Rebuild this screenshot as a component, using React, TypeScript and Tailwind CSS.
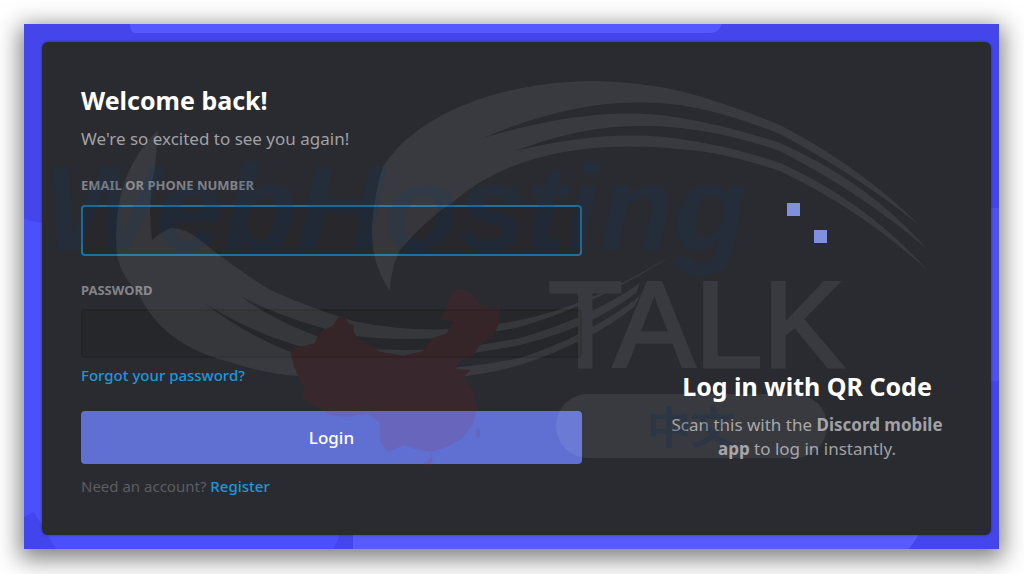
const CHINA =
  'M30 240l30-10 45-10 8-26 17-14 30-13 12-22 18-7 16 22 14 5 2 22 10 16 38 22 30 20 70 12 60-14 28-38 42-15 20-35-40-8 18-26 17-55 30-10 35 18 20 32 40 15 20-15-3 55-17 38-40 27-25 35-38 10-7 25 42 5-22 20 32 45 10 45-13 50-32 45-45 25-50 15-50-10-30-10-50 20-20-30-5-60-35-25-60 10-50-5-40-25-45-25 8-25-13-30-20-40z';

function Backdrop() {
  return (
    <svg
      className="pointer-events-none absolute inset-0 h-full w-full"
      viewBox="0 0 975 525"
      preserveAspectRatio="none"
      aria-hidden="true"
    >
      <path d="M106 0h592q-3 9-12 9H112q-6 0-6-9z" fill="#5558ff" />
      <path d="M0 195q12 4 24 5v325H0z" fill="#4c50fb" />
      <path d="M24 500h291v13l-6 12H24z" fill="#4c50fb" />
      <path d="M0 210l0 0v283l10-5 8 13 14 24H0z" fill="#4245ec" />
      <path d="M0 195q12 4 24 5v288H0z" fill="#4c50fb" />
      <path d="M329 505h570l-14 20H329z" fill="#575bfc" />
      <path d="M960 184h15v173h-15z" fill="#4f52f0" />
    </svg>
  );
}

function Watermark() {
  return (
    <svg
      className="pointer-events-none absolute inset-0 h-full w-full"
      viewBox="24 24 975 525"
      preserveAspectRatio="none"
      aria-hidden="true"
    >
      <mask id="outside-map" maskUnits="userSpaceOnUse" x="24" y="24" width="975" height="525">
        <rect x="24" y="24" width="975" height="525" fill="#ffffff" />
        <path d={CHINA} transform="translate(280 270) scale(0.3333)" fill="#000000" />
      </mask>
      <g fill="#ffffff" opacity="0.07">
        <path d="M390 291Q370 262 372 225Q375 190 383 167C415 115 500 81 596 81Q640 82 680 91Q720 101 780 125Q862 168 918 224Q855 174 780 134Q725 112 680 105Q590 92 483 138Q600 103 680 118Q725 125 780 143Q868 182 926 248Q860 192 780 151Q725 132 680 128Q600 118 515 151Q610 128 680 139Q730 146 780 163Q865 201 926 269Q860 209 780 171Q725 152 680 149Q530 135 453 202Q425 220 400 250Q390 270 390 291z" />
        <g mask="url(#outside-map)">
          <path d="M158 130Q110 177 117 255Q122 278 137 290Q160 345 230 362Q265 374 298 376Q430 390 520 365Q590 342 634 307L640 296Q590 335 520 358Q430 378 320 362Q255 343 203 302Q260 340 340 356Q430 364 520 345Q590 328 636 293L640 283Q590 318 520 338Q430 356 355 347Q290 332 240 296Q290 322 355 336Q430 345 520 327Q600 303 672 255Q590 306 520 320Q440 338 357 322Q315 310 270 290Q233 267 200 240Q185 228 171 228Q162 231 152 240Q147 205 155 167z" />
        </g>
        <rect x="556" y="394" width="271" height="64" rx="32" />
        <text
          x="548"
          y="367"
          fontSize="122"
          stroke="#ffffff"
          strokeWidth="3"
          fontFamily="'Liberation Sans', sans-serif"
        >
          TALK
        </text>
      </g>
      <text
        x="44"
        y="250"
        fontSize="121"
        fontWeight="700"
        fontStyle="italic"
        fill="#003d78"
        opacity="0.13"
        fontFamily="'Liberation Sans', sans-serif"
      >
        WebHosting
      </text>
      <text
        x="647"
        y="444"
        fontSize="44"
        fontWeight="700"
        fill="#002c5c"
        opacity="0.22"
        fontFamily="'Noto Sans CJK SC', sans-serif"
      >
        中文
      </text>
      <g transform="translate(280 270) scale(0.3333)" fill="#a01822" opacity="0.12">
        <path d={CHINA} />
        <ellipse cx="594" cy="490" rx="6" ry="15" />
        <path d="M456 546l2 22-8 20-20 2 4-14 16-8z" />
      </g>
    </svg>
  );
}

const label = 'block text-[13px] leading-5 font-bold text-[#828388]';
const link = 'font-medium text-[#1b98dc]';
const heading = 'text-[25px] font-bold text-white';

export default function App() {
  return (
    <div className="min-h-screen bg-white py-6 pr-[25px] pl-6 font-['Noto_Sans',sans-serif]">
      <div className="relative bg-[#4446ec] pt-[18px] pr-2 pb-[14px] pl-[18px] shadow-[0_6px_22px_4px_rgba(0,0,0,0.5)]">
        <Backdrop />
        <main className="relative flex gap-20 rounded-md bg-[#2a2b30] p-[39px] shadow-[0_0_3px_rgba(0,0,0,0.4)]">
          <form className="min-w-0 flex-1" onSubmit={(e) => e.preventDefault()}>
            <h1 className={`${heading} leading-[38px]`}>Welcome back!</h1>
            <p className="mt-2 text-[17px] leading-6 text-[#a0a1a5]">We're so excited to see you again!</p>

            <label htmlFor="email" className={`${label} mt-6`}>
              EMAIL OR PHONE NUMBER
            </label>
            <input
              id="email"
              type="text"
              className="mt-[10px] block h-[51px] w-full rounded-[4px] border-2 border-[#227099] bg-[#27272c] px-3 text-white outline-none"
            />

            <label htmlFor="password" className={`${label} mt-6`}>
              PASSWORD
            </label>
            <input
              id="password"
              type="password"
              className="mt-[9px] block h-[49px] w-full rounded-[4px] border-2 border-[#222327] bg-[#26272b] px-3 text-white outline-none"
            />
            <a href="#forgot" className={`${link} mt-[7px] block text-[15px] leading-5`}>
              Forgot your password?
            </a>

            <button
              type="submit"
              className="mt-[26px] block h-[53px] w-full rounded-[4px] bg-[#6070d2] text-[17px] font-medium text-white"
            >
              Login
            </button>
            <p className="mt-3 text-[15px] leading-5 text-[#5c5d62]">
              Need an account?{' '}
              <a href="#register" className={link}>
                Register
              </a>
            </p>
          </form>

          <section className="w-[290px] shrink-0 text-center">
            <div className="flex h-[284px] items-center justify-center" role="status" aria-label="Loading">
              <div className="grid grid-cols-2 gap-[14px]">
                <span className="size-[13px] bg-[#7f90dc]" />
                <span className="col-start-2 row-start-2 size-[13px] bg-[#7f90dc]" />
              </div>
            </div>
            <h2 className={`${heading} mt-1 leading-[34px]`}>Log in with QR Code</h2>
            <p className="mt-[10px] text-[17px] leading-6 text-[#a0a1a5]">
              Scan this with the <strong className="font-bold">Discord mobile app</strong> to log in instantly.
            </p>
          </section>
        </main>
        <Watermark />
      </div>
    </div>
  );
}
